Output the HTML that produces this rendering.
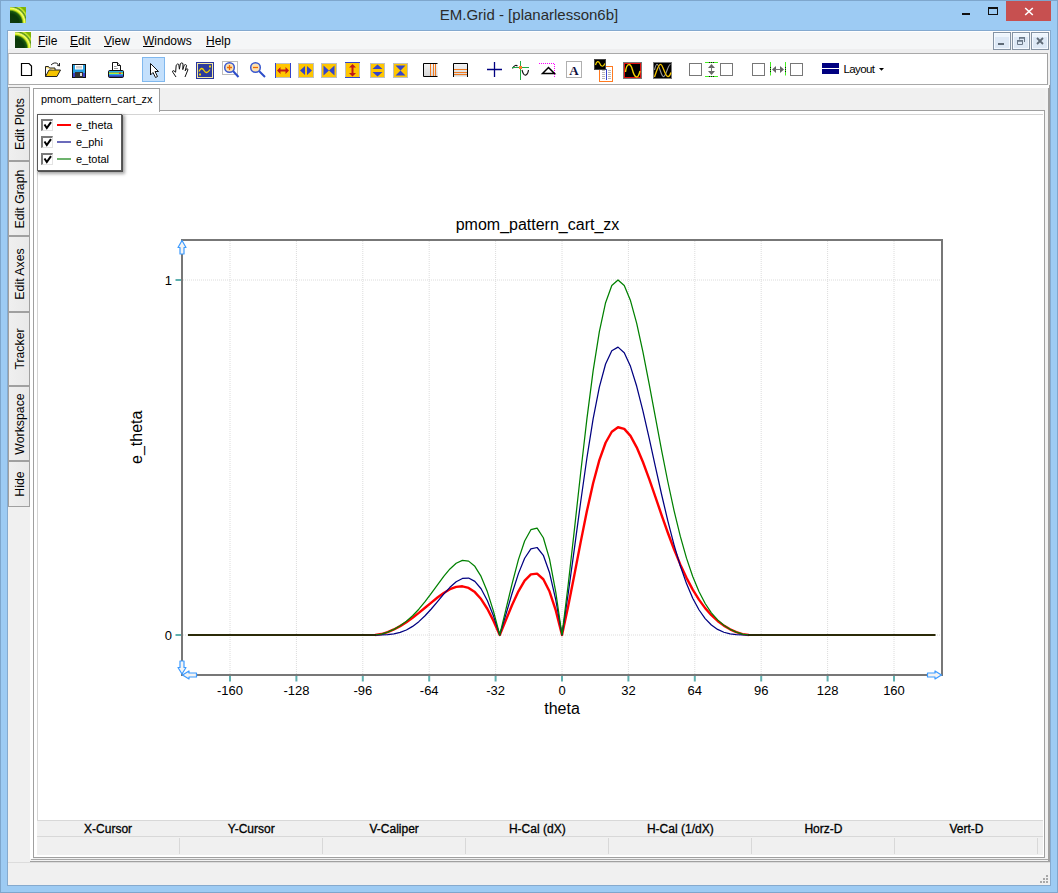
<!DOCTYPE html>
<html><head><meta charset="utf-8">
<style>
*{margin:0;padding:0;box-sizing:border-box}
html,body{width:1058px;height:893px;overflow:hidden;background:#9dcbf3;font-family:"Liberation Sans",sans-serif;color:#000}
.a{position:absolute}
#frame{left:0;top:0;width:1058px;height:893px;border:1px solid #7ea6cc}
#title{left:0;top:6px;width:1058px;text-align:center;font-size:15px;color:#2b2b2b;letter-spacing:0}
#client{left:8px;top:30px;width:1042px;height:855px;background:#f0f0f0;border-top:1px solid #84a9cf}
#menubar{left:8px;top:31px;width:1042px;height:18px;background:#f5f6f7;border-top:1px solid #fff}
#menuband{left:8px;top:49px;width:1042px;height:4px;background:#eeeeef}
.menu{top:34px;font-size:12px;color:#000}
.menu u{text-decoration:underline;text-decoration-thickness:1px;text-underline-offset:0.5px}
#toolbar{left:8px;top:53px;width:1040px;height:32px;background:#fff;border-top:1px solid #a9a9a9;border-bottom:1px solid #a9a9a9;border-left:1px solid #c8c8c8;border-right:1px solid #a0a0a0}
.vtab{left:8px;width:22px;background:linear-gradient(to right,#efefef,#e9e9e9);border:1px solid #a0a0a0}
.vtab span{position:absolute;left:50%;top:50%;transform:translate(calc(-50% + 0.5px),-50%) rotate(-90deg);white-space:nowrap;font-size:12.3px}
.hdr{top:822px;font-size:12px;-webkit-text-stroke:0.3px #000;text-align:center;width:143px}
.mdib{top:32px;width:18px;height:18px;border:1px solid #8593a3;background:linear-gradient(#eef5fc 0,#eef5fc 22%,#dde8f5 23%,#dde8f5 100%);box-shadow:inset 0 0 0 1px #f4f9ff}
</style></head><body>
<div class="a" id="frame"></div>
<!-- title icon -->
<div class="a" style="left:10px;top:7px;width:16px;height:16px;background:radial-gradient(circle at 0% 100%,#103a10 0,#0a3a08 40%,#1a5a10 52%,#d8f020 60%,#f6ff70 66%,#50901a 73%,#d0ec30 79%,#78b000 86%,#8cbc10 100%)"></div>
<div class="a" id="title">EM.Grid - [planarlesson6b]</div>
<!-- title buttons -->
<div class="a" style="left:962px;top:13px;width:8px;height:2px;background:#111"></div>
<div class="a" style="left:988px;top:7px;width:10px;height:8px;border:1px solid #111;border-top-width:2px"></div>
<div class="a" style="left:1006px;top:1px;width:45px;height:20px;background:#c75050"></div>
<svg class="a" style="left:1024px;top:7px" width="10" height="9"><path d="M1.2 1 L8.8 8 M8.8 1 L1.2 8" stroke="#fff" stroke-width="1.6"/></svg>

<div class="a" id="client"></div>
<div class="a" style="left:7px;top:30px;width:1044px;height:856px;border:1px solid #85aace;border-top:none"></div>
<div class="a" id="menubar"></div>
<div class="a" id="menuband"></div>
<div class="a" style="left:15px;top:32px;width:16px;height:16px;background:radial-gradient(circle at 0% 100%,#103a10 0,#0a3a08 40%,#1a5a10 52%,#d8f020 60%,#f6ff70 66%,#50901a 73%,#d0ec30 79%,#78b000 86%,#8cbc10 100%)"></div>
<div class="a menu" style="left:38px"><u>F</u>ile</div>
<div class="a menu" style="left:70px"><u>E</u>dit</div>
<div class="a menu" style="left:104px"><u>V</u>iew</div>
<div class="a menu" style="left:143px"><u>W</u>indows</div>
<div class="a menu" style="left:206px"><u>H</u>elp</div>
<div class="a mdib" style="left:993px"></div>
<div class="a mdib" style="left:1012px"></div>
<div class="a mdib" style="left:1031px"></div>
<div class="a" style="left:998px;top:43px;width:6px;height:2px;background:#5f6b77"></div>
<svg class="a" style="left:1012px;top:32px" width="18" height="18"><g fill="none" stroke="#6a7888" stroke-width="1"><path d="M5.5 8.5 V12.5 H10.5 V8.5 Z"/><path d="M7.5 7.5 V5.5 H12.5 V10"/></g><path d="M5 8 H11 V9.7 H5 Z M7 5 H13 V6.7 H7 Z" fill="#6a7888"/></svg>
<svg class="a" style="left:1035px;top:36px" width="10" height="10"><path d="M2 2 L8 8 M8 2 L2 8" stroke="#5f6b77" stroke-width="1.8"/></svg>

<div class="a" id="toolbar"></div>
<svg class="a" style="left:0;top:0" width="1058" height="90">
<!-- new doc -->
<path d="M21.5 63.5 H29 L31.5 66 V75.5 H21.5 Z" fill="#fff" stroke="#000" stroke-width="1.2"/>
<!-- open folder -->
<path d="M45.5 68 L45.5 76.5 L57 76.5 L60.5 70 L49 70 L45.5 76.5" fill="#f5c400" stroke="#222" stroke-width="1"/>
<path d="M45.5 68 L45.5 66.5 L48.5 66.5 L49.5 68 L55 68 L55 70" fill="#ffe37a" stroke="#222" stroke-width="1"/>
<path d="M51 65 Q55 61 58.5 64.5" fill="none" stroke="#222" stroke-width="1"/>
<path d="M57 65 L59.5 66 L59.5 63" fill="none" stroke="#222" stroke-width="1"/>
<!-- save -->
<rect x="72.5" y="64.5" width="13" height="13" fill="#28a0e0" stroke="#111" stroke-width="1"/><rect x="73" y="73" width="12" height="4" fill="#3a40c8"/>
<rect x="75" y="65" width="8" height="4.5" fill="#fff"/><rect x="76" y="66" width="6" height="2.5" fill="#d0d0d0"/>
<rect x="75" y="72" width="8" height="5.5" fill="#333"/>
<rect x="80" y="73" width="2" height="3" fill="#ddd"/>
<!-- print -->
<path d="M112.5 62.5 H117.5 L120.5 65.5 V70.5 H112.5 Z" fill="#fff" stroke="#111" stroke-width="1"/>
<path d="M117.5 62.5 V65.5 H120.5" fill="#ddd" stroke="#111" stroke-width="1"/>
<path d="M114 66.5 H116.5 M114 68.5 H118" stroke="#999" stroke-width="1"/>
<rect x="108.5" y="70.5" width="15" height="7" rx="1.2" fill="#1a2a80" stroke="#111" stroke-width="1"/>
<rect x="109" y="71" width="14" height="1.5" fill="#22aee8"/>
<rect x="109" y="72.5" width="14" height="1.5" fill="#b8e830"/>
<rect x="109" y="74" width="14" height="1" fill="#22aee8"/>
<rect x="109" y="75" width="14" height="1.5" fill="#3a5ad0"/>
<rect x="119" y="72.5" width="2" height="1.5" fill="#ee3333"/>
<!-- selected arrow button -->
<rect x="142.5" y="57.5" width="22" height="24" fill="#c4e0fc" stroke="#80b8ee" stroke-width="1"/>
<path d="M150.5 63.5 L150.5 75 L153 72.5 L155.5 77.5 L157.5 76.5 L155 71.5 L158.5 71.5 Z" fill="#fff" stroke="#111" stroke-width="1" stroke-linejoin="round"/>
<!-- hand -->
<path d="M176 77 L172.8 72.2 Q172 70.6 173.6 70.6 L175.6 72.2 L176.2 65.2 Q177.4 63.2 178.8 64.4 L179.4 69.2 L180.4 63.6 Q181.8 62.2 183 63.6 L182.8 69.6 L184.2 65.2 Q185.6 63.8 186.6 65.4 L185.2 70.8 L186.2 69 Q187.8 68.2 187.9 69.8 L185 77" fill="#fff" stroke="#111" stroke-width="1" stroke-linejoin="round"/>
<!-- sine box -->
<rect x="196.5" y="62.5" width="17" height="16" fill="#2c3b9e" stroke="#2836a0" stroke-width="1"/>
<rect x="197.5" y="63.5" width="15" height="14" fill="none" stroke="#f3e7a0" stroke-width="1"/>
<path d="M199 71.5 Q201.5 66 204 70.5 Q206.5 75 210 69.5" fill="none" stroke="#f5d300" stroke-width="1.3"/>
<rect x="199" y="73.5" width="2" height="2" fill="#f5d300"/><rect x="209" y="65.5" width="2" height="2" fill="#f5d300"/>
<!-- zoom in -->
<rect x="222.5" y="61.5" width="15" height="13" fill="#fff" stroke="#bdbdbd" stroke-width="1"/>
<line x1="233" y1="71" x2="238.5" y2="77" stroke="#2c4cc8" stroke-width="2"/>
<circle cx="229.5" cy="67.5" r="4.8" fill="#fde2b0" stroke="#3a58d0" stroke-width="1.5"/>
<path d="M227 67.5 H232 M229.5 65 V70" stroke="#ef6a00" stroke-width="1.3"/>
<!-- zoom out -->
<line x1="259" y1="71" x2="265" y2="77" stroke="#2c4cc8" stroke-width="2"/>
<circle cx="255.5" cy="67.5" r="4.8" fill="#fde2b0" stroke="#3a58d0" stroke-width="1.5"/>
<path d="M253 67.5 H258" stroke="#ef6a00" stroke-width="1.3"/>
<!-- arrow group -->
<g stroke-width="1">
<rect x="275.5" y="63.5" width="15" height="14" fill="#ffc600" stroke="#c0c0c0"/>
<line x1="275.5" y1="63" x2="275.5" y2="78" stroke="#3344cc"/><line x1="290.5" y1="63" x2="290.5" y2="78" stroke="#3344cc"/>
<path d="M277 70.5 L280.5 67 V69.5 H285.5 V67 L289 70.5 L285.5 74 V71.5 H280.5 V74 Z" fill="#c01818"/>
<rect x="298.5" y="63.5" width="15" height="14" fill="#ffc600" stroke="#c0c0c0"/>
<path d="M305 66 V75 L300 70.5 Z M307 66 V75 L312 70.5 Z" fill="#3344cc"/>
<rect x="321.5" y="63.5" width="15" height="14" fill="#ffc600" stroke="#c0c0c0"/>
<path d="M323.5 65.5 V75.5 L329 70.5 Z M334.5 65.5 V75.5 L329 70.5 Z" fill="#3344cc"/>
<rect x="345.5" y="62.5" width="14" height="15" fill="#ffc600" stroke="#c0c0c0"/>
<line x1="345" y1="62.5" x2="360" y2="62.5" stroke="#3344cc"/><line x1="345" y1="77.5" x2="360" y2="77.5" stroke="#3344cc"/>
<path d="M352.5 64 L356 67.5 H353.5 V73 H356 L352.5 76.5 L349 73 H351.5 V67.5 H349 Z" fill="#c01818"/>
<rect x="370.5" y="63.5" width="14" height="14" fill="#ffc600" stroke="#c0c0c0"/>
<path d="M372.5 69 H382.5 L377.5 64.5 Z M372.5 72 H382.5 L377.5 76.5 Z" fill="#3344cc"/>
<rect x="393.5" y="63.5" width="14" height="14" fill="#ffc600" stroke="#c0c0c0"/>
<path d="M395.5 65.5 H405.5 L400.5 70.5 Z M395.5 75.5 H405.5 L400.5 70.5 Z" fill="#3344cc"/>
</g>
<!-- vertical lines icon -->
<defs><linearGradient id="gg" x1="0" y1="0" x2="0" y2="1"><stop offset="0" stop-color="#f4f4f4"/><stop offset="1" stop-color="#d6d6d6"/></linearGradient></defs>
<rect x="423.5" y="63.5" width="14" height="13" fill="url(#gg)"/>
<path d="M437.5 63.5 H423.5 V76.5 H437.5" fill="none" stroke="#000" stroke-width="1"/>
<path d="M430.5 64 V76 M433.5 64 V76 M435.5 64 V76" stroke="#f07a20" stroke-width="1"/>
<!-- horizontal lines icon -->
<rect x="453.5" y="63.5" width="14" height="13" fill="url(#gg)"/>
<path d="M453.5 77 V63.5 H467.5 V77" fill="none" stroke="#000" stroke-width="1"/>
<path d="M454 69.5 H467 M454 72.5 H467 M454 74.5 H467" stroke="#f07a20" stroke-width="1"/>
<!-- plus -->
<path d="M487 69.5 H502 M494.5 62 V77" stroke="#000080" stroke-width="1.3"/>
<!-- crosshair sine -->
<path d="M512.5 68.5 Q515 64 517.5 66 M522 70 Q523.5 76 526 75 Q528 74 528.5 70" fill="none" stroke="#111" stroke-width="1.1"/>
<path d="M520.5 61 V80 M512 67.5 H529" stroke="#22aa44" stroke-width="1"/>
<rect x="519" y="66" width="3" height="3" fill="#ff7f27"/>
<!-- triangle -->
<path d="M539 63.5 H554.5 V78" fill="none" stroke="#ff00ff" stroke-width="1" stroke-dasharray="1,1"/>
<path d="M542.5 73.5 L548.5 67.5 L554.5 73.5 Z" fill="none" stroke="#000" stroke-width="1.5"/>
<!-- A -->
<rect x="566.5" y="61.5" width="15" height="16" fill="#fff" stroke="#b0b0b0" stroke-width="1"/>
<text x="574" y="75" font-family="Liberation Serif" font-weight="bold" font-size="13" text-anchor="middle" fill="#101040">A</text>
<!-- scope + doc -->
<rect x="599.5" y="66.5" width="13" height="15" fill="#fff" stroke="#ff7a20" stroke-width="1"/>
<path d="M602 70.5 H605 M602 72.5 H605 M602 74.5 H605 M602 76.5 H605 M602 78.5 H605 M608 70.5 H611 M608 72.5 H611 M608 74.5 H611 M608 76.5 H611 M608 78.5 H611" stroke="#b8b8b8" stroke-width="1"/>
<path d="M606.5 69 V80" stroke="#3344cc" stroke-width="1"/>
<rect x="594.5" y="59.5" width="11" height="10" fill="#000" stroke="#444" stroke-width="1"/>
<path d="M595.5 65 C596.5 61, 598.5 60.5, 599.8 63.5 C601 66.8, 603.5 67.5, 604.8 63.5" fill="none" stroke="#f5d300" stroke-width="1.2"/>
<!-- red scope -->
<rect x="623.5" y="62.5" width="18" height="16" fill="#000" stroke="#777" stroke-width="1"/>
<rect x="624.5" y="63.5" width="16" height="14" fill="none" stroke="#e01010" stroke-width="1"/>
<path d="M625.5 72 C626.5 63, 630.5 62, 632.5 70 S 638 80, 640 71" fill="none" stroke="#f5d300" stroke-width="1.4"/>
<!-- dual sine -->
<rect x="653.5" y="62.5" width="18" height="16" fill="#000" stroke="#777" stroke-width="1"/>
<path d="M654.5 70 C655.5 66, 656 64.3, 657 64.3 C659.5 64.5, 661 76.6, 663.5 76.6 C666 76.5, 668 64.3, 670.5 64.3" fill="none" stroke="#999" stroke-width="1.1"/>
<path d="M654.5 77 C657 70, 658.5 64, 660.6 64.3 C663 64.5, 665 76.5, 668 76.6 C669.5 76.6, 670.5 74, 671 72.5" fill="none" stroke="#f5c400" stroke-width="1.3"/>
<!-- align boxes -->
<g fill="none" stroke="#777" stroke-width="1">
<rect x="689.5" y="63.5" width="12" height="12"/><rect x="720.5" y="63.5" width="12" height="12"/>
<rect x="752.5" y="63.5" width="12" height="12"/><rect x="790.5" y="63.5" width="12" height="12"/>
</g>
<path d="M705 62.5 H718 M705 76.5 H718" stroke="#44ee22" stroke-width="1"/><path d="M709 62.5 H714 M709 76.5 H714" stroke="#111" stroke-width="1" stroke-dasharray="1,1"/>
<path d="M711.5 64 L708 68 H715 Z M711.5 75 L708 71 H715 Z" fill="#666"/><path d="M711.5 67 V72" stroke="#777"/>
<path d="M770.5 62 V75.5 M785.5 62 V75.5" stroke="#44ee22" stroke-width="1"/><path d="M770.5 67 V72 M785.5 67 V72" stroke="#111" stroke-width="1" stroke-dasharray="1,1"/>
<path d="M772 69.5 L776 66 V73 Z M784 69.5 L780 66 V73 Z" fill="#666"/><path d="M775 69.5 H781" stroke="#777"/>
<!-- layout -->
<rect x="822" y="63" width="17" height="5" fill="#000080"/><rect x="822" y="69" width="17" height="5" fill="#000080"/>
<text x="843.5" y="73" font-family="Liberation Sans" font-size="11.5" fill="#000" textLength="31.5" lengthAdjust="spacing">Layout</text>
<path d="M879 68 H884 L881.5 70.8 Z" fill="#000"/>
</svg>


<!-- left vertical tabs -->
<div class="a vtab" style="top:87px;height:74px"><span>Edit Plots</span></div>
<div class="a vtab" style="top:161px;height:75px"><span>Edit Graph</span></div>
<div class="a vtab" style="top:236px;height:76px"><span>Edit Axes</span></div>
<div class="a vtab" style="top:312px;height:74px"><span>Tracker</span></div>
<div class="a vtab" style="top:386px;height:75px"><span>Workspace</span></div>
<div class="a vtab" style="top:461px;height:46px"><span>Hide</span></div>

<!-- MDI area borders -->
<div class="a" style="left:30px;top:85px;width:1020px;height:777px;background:#f2f2f2;border-bottom:1px solid #a0a0a0;border-right:2px solid #a0a0a0"></div>
<div class="a" style="left:30px;top:85px;width:1019px;height:3px;background:#fff"></div>
<div class="a" style="left:30px;top:85px;width:3px;height:774px;background:#fff"></div>
<div class="a" style="left:33px;top:88px;width:1012px;height:22px;background:#f0f0f0"></div>
<!-- page -->
<div class="a" style="left:33px;top:110px;width:1012px;height:748px;border:1px solid #a0a0a0;background:#fff"></div>
<div class="a" style="left:31px;top:859px;width:1017px;height:1px;background:#a8a8a8"></div>
<!-- doc tab -->
<div class="a" style="left:33px;top:88px;width:127px;height:24px;border:1px solid #a0a0a0;border-bottom:none;background:#fff"></div>
<div class="a" style="left:41px;top:93px;font-size:10.9px;color:#000">pmom_pattern_cart_zx</div>

<!-- plot panel -->
<div class="a" style="left:37px;top:114px;width:1006px;height:707px;border-left:1px solid #d4d4d4;border-top:1px solid #d4d4d4;background:#fff"></div>

<svg class="a" style="left:0;top:0" width="1058" height="893">
<line x1="230.0" y1="241" x2="230.0" y2="674" stroke="#dcdcdc" stroke-width="1" stroke-dasharray="1,1"/>
<line x1="296.4" y1="241" x2="296.4" y2="674" stroke="#dcdcdc" stroke-width="1" stroke-dasharray="1,1"/>
<line x1="362.8" y1="241" x2="362.8" y2="674" stroke="#dcdcdc" stroke-width="1" stroke-dasharray="1,1"/>
<line x1="429.2" y1="241" x2="429.2" y2="674" stroke="#dcdcdc" stroke-width="1" stroke-dasharray="1,1"/>
<line x1="495.6" y1="241" x2="495.6" y2="674" stroke="#dcdcdc" stroke-width="1" stroke-dasharray="1,1"/>
<line x1="562.0" y1="241" x2="562.0" y2="674" stroke="#dcdcdc" stroke-width="1" stroke-dasharray="1,1"/>
<line x1="628.4" y1="241" x2="628.4" y2="674" stroke="#dcdcdc" stroke-width="1" stroke-dasharray="1,1"/>
<line x1="694.8" y1="241" x2="694.8" y2="674" stroke="#dcdcdc" stroke-width="1" stroke-dasharray="1,1"/>
<line x1="761.2" y1="241" x2="761.2" y2="674" stroke="#dcdcdc" stroke-width="1" stroke-dasharray="1,1"/>
<line x1="827.6" y1="241" x2="827.6" y2="674" stroke="#dcdcdc" stroke-width="1" stroke-dasharray="1,1"/>
<line x1="894.0" y1="241" x2="894.0" y2="674" stroke="#dcdcdc" stroke-width="1" stroke-dasharray="1,1"/>
<line x1="183" y1="280" x2="941" y2="280" stroke="#dcdcdc" stroke-width="1" stroke-dasharray="1,1"/>
<line x1="183" y1="635" x2="941" y2="635" stroke="#dcdcdc" stroke-width="1" stroke-dasharray="1,1"/>
<rect x="182" y="240" width="760" height="435" fill="none" stroke="#777" stroke-width="2"/>
<line x1="230.0" y1="676" x2="230.0" y2="681.5" stroke="#5fb0b0" stroke-width="2"/>
<text x="230.0" y="694.5" font-size="13" text-anchor="middle" font-family="Liberation Sans">-160</text>
<line x1="296.4" y1="676" x2="296.4" y2="681.5" stroke="#5fb0b0" stroke-width="2"/>
<text x="296.4" y="694.5" font-size="13" text-anchor="middle" font-family="Liberation Sans">-128</text>
<line x1="362.8" y1="676" x2="362.8" y2="681.5" stroke="#5fb0b0" stroke-width="2"/>
<text x="362.8" y="694.5" font-size="13" text-anchor="middle" font-family="Liberation Sans">-96</text>
<line x1="429.2" y1="676" x2="429.2" y2="681.5" stroke="#5fb0b0" stroke-width="2"/>
<text x="429.2" y="694.5" font-size="13" text-anchor="middle" font-family="Liberation Sans">-64</text>
<line x1="495.6" y1="676" x2="495.6" y2="681.5" stroke="#5fb0b0" stroke-width="2"/>
<text x="495.6" y="694.5" font-size="13" text-anchor="middle" font-family="Liberation Sans">-32</text>
<line x1="562.0" y1="676" x2="562.0" y2="681.5" stroke="#5fb0b0" stroke-width="2"/>
<text x="562.0" y="694.5" font-size="13" text-anchor="middle" font-family="Liberation Sans">0</text>
<line x1="628.4" y1="676" x2="628.4" y2="681.5" stroke="#5fb0b0" stroke-width="2"/>
<text x="628.4" y="694.5" font-size="13" text-anchor="middle" font-family="Liberation Sans">32</text>
<line x1="694.8" y1="676" x2="694.8" y2="681.5" stroke="#5fb0b0" stroke-width="2"/>
<text x="694.8" y="694.5" font-size="13" text-anchor="middle" font-family="Liberation Sans">64</text>
<line x1="761.2" y1="676" x2="761.2" y2="681.5" stroke="#5fb0b0" stroke-width="2"/>
<text x="761.2" y="694.5" font-size="13" text-anchor="middle" font-family="Liberation Sans">96</text>
<line x1="827.6" y1="676" x2="827.6" y2="681.5" stroke="#5fb0b0" stroke-width="2"/>
<text x="827.6" y="694.5" font-size="13" text-anchor="middle" font-family="Liberation Sans">128</text>
<line x1="894.0" y1="676" x2="894.0" y2="681.5" stroke="#5fb0b0" stroke-width="2"/>
<text x="894.0" y="694.5" font-size="13" text-anchor="middle" font-family="Liberation Sans">160</text>
<line x1="175.5" y1="280" x2="181" y2="280" stroke="#5fb0b0" stroke-width="2"/>
<text x="172" y="284.8" font-size="13" text-anchor="end" font-family="Liberation Sans">1</text>
<line x1="175.5" y1="635" x2="181" y2="635" stroke="#5fb0b0" stroke-width="2"/>
<text x="172" y="639.8" font-size="13" text-anchor="end" font-family="Liberation Sans">0</text>
<text x="537.5" y="230" font-size="16" text-anchor="middle" font-family="Liberation Sans">pmom_pattern_cart_zx</text>
<text x="562" y="714" font-size="16" text-anchor="middle" font-family="Liberation Sans">theta</text>
<text transform="translate(142,437.3) rotate(-90)" font-size="16" text-anchor="middle" font-family="Liberation Sans">e_theta</text>
<polyline fill="none" stroke="#ff0000" stroke-width="2.4" stroke-linejoin="round" points="375.25,635.00 381.48,634.06 387.70,632.13 393.92,629.45 400.15,626.12 406.38,622.21 412.60,617.77 418.82,612.92 425.05,607.78 431.27,602.55 437.50,597.49 443.73,592.93 449.95,589.24 456.18,586.89 462.40,586.30 468.62,587.93 474.85,592.11 481.07,599.04 487.30,608.73 493.52,620.90 499.75,635.00 505.98,619.86 512.20,604.83 518.42,591.28 524.65,580.65 530.88,574.36 537.10,573.61 543.33,579.24 549.55,591.58 555.77,610.44 562.00,635.00 568.23,606.05 574.45,574.43 580.67,542.12 586.90,511.10 593.12,483.25 599.35,460.10 605.58,442.73 611.80,431.76 618.02,427.27 624.25,428.89 630.48,435.90 636.70,447.32 642.92,462.02 649.15,478.90 655.38,496.89 661.60,515.08 667.83,532.73 674.05,549.28 680.27,564.39 686.50,577.85 692.73,589.59 698.95,599.65 705.17,608.13 711.40,615.18 717.62,620.96 723.85,625.62 730.08,629.31 736.30,632.12 742.52,634.07 748.75,635.00"/>
<polyline fill="none" stroke="#000080" stroke-width="1.25" stroke-linejoin="round" points="375.25,635.00 381.48,634.97 387.70,634.70 393.92,633.94 400.15,632.44 406.38,629.97 412.60,626.40 418.82,621.65 425.05,615.78 431.27,608.99 437.50,601.62 443.73,594.18 449.95,587.33 456.18,581.81 462.40,578.45 468.62,578.07 474.85,581.35 481.07,588.75 487.30,600.43 493.52,616.10 499.75,635.00 505.98,614.13 512.20,593.00 518.42,573.63 524.65,558.23 530.88,548.92 537.10,547.51 543.33,555.30 549.55,572.82 555.77,599.77 562.00,635.00 568.23,593.45 574.45,548.14 580.67,501.99 586.90,457.99 593.12,418.91 599.35,387.04 605.58,364.00 611.80,350.67 618.02,347.12 624.25,352.74 630.48,366.33 636.70,386.30 642.92,410.86 649.15,438.17 655.38,466.54 661.60,494.50 667.83,520.87 674.05,544.82 680.27,565.81 686.50,583.61 692.73,598.20 698.95,609.76 705.17,618.56 711.40,624.99 717.62,629.42 723.85,632.26 730.08,633.90 736.30,634.70 742.52,634.97 748.75,635.00"/>
<polyline fill="none" stroke="#008000" stroke-width="1.25" stroke-linejoin="round" points="375.25,635.00 381.48,634.06 387.70,632.11 393.92,629.35 400.15,625.76 406.38,621.25 412.60,615.75 418.82,609.20 425.05,601.68 431.27,593.42 437.50,584.79 443.73,576.38 449.95,568.92 456.18,563.28 462.40,560.38 468.62,561.13 474.85,566.31 481.07,576.42 487.30,591.58 493.52,611.42 499.75,635.00 505.98,609.22 512.20,583.29 518.42,559.65 524.65,540.94 530.88,529.71 537.10,528.13 543.33,537.73 549.55,559.16 555.77,592.05 562.00,635.00 568.23,584.36 574.45,529.11 580.67,472.77 586.90,418.94 593.12,370.95 599.35,331.56 605.58,302.72 611.80,285.50 618.02,280.00 624.25,285.50 630.48,300.60 636.70,323.43 642.92,351.88 649.15,383.79 655.38,417.17 661.60,450.28 667.83,481.75 674.05,510.58 680.27,536.15 686.50,558.14 692.73,576.55 698.95,591.56 705.17,603.50 711.40,612.79 717.62,619.89 723.85,625.23 730.08,629.21 736.30,632.10 742.52,634.07 748.75,635.00"/>
<path d="M188 635 H376 M748 635 H935.5" stroke="#2b2a08" stroke-width="2"/>
<path d="M182 240.5 L186 247.5 L184 247.5 L184 254 L180 254 L180 247.5 L178 247.5 Z" fill="#f4f4f4" stroke="#3d9bff" stroke-width="1.2" stroke-linejoin="round"/>
<path d="M182 674 L178 667.5 L180 667.5 L180 661 L184 661 L184 667.5 L186 667.5 Z" fill="#f4f4f4" stroke="#3d9bff" stroke-width="1.2" stroke-linejoin="round"/>
<path d="M182.5 675 L189 671 L189 673 L196.5 673 L196.5 677 L189 677 L189 679 Z" fill="#f4f4f4" stroke="#3d9bff" stroke-width="1.2" stroke-linejoin="round"/>
<path d="M941.5 675 L935 671 L935 673 L927.5 673 L927.5 677 L935 677 L935 679 Z" fill="#f4f4f4" stroke="#3d9bff" stroke-width="1.2" stroke-linejoin="round"/>
</svg>

<!-- legend -->
<div class="a" style="left:37px;top:114px;width:85px;height:57px;border:1px solid #5a5a5a;background:#fff;box-shadow:1px 1px 0 #505050,2px 2px 3px 1px rgba(0,0,0,.35)"></div>
<div class="a" style="left:41px;top:119px;width:12px;height:12px;background:#fff;border-top:2px solid #7a7a7a;border-left:2px solid #7a7a7a;border-right:1px solid #e3e3e3;border-bottom:1px solid #e3e3e3"></div>
<svg class="a" style="left:41px;top:119px" width="12" height="12"><path d="M3.5 5.5 L5.8 9 L10 3.2" fill="none" stroke="#000" stroke-width="2"/></svg>
<div class="a" style="left:57px;top:124px;width:14px;height:2.2px;background:#ff0000"></div>
<div class="a" style="left:76px;top:119px;font-size:11px">e_theta</div>
<div class="a" style="left:41px;top:136px;width:12px;height:12px;background:#fff;border-top:2px solid #7a7a7a;border-left:2px solid #7a7a7a;border-right:1px solid #e3e3e3;border-bottom:1px solid #e3e3e3"></div>
<svg class="a" style="left:41px;top:136px" width="12" height="12"><path d="M3.5 5.5 L5.8 9 L10 3.2" fill="none" stroke="#000" stroke-width="2"/></svg>
<div class="a" style="left:57px;top:141px;width:14px;height:2px;background:#6b6bbb"></div>
<div class="a" style="left:76px;top:136px;font-size:11px">e_phi</div>
<div class="a" style="left:41px;top:153px;width:12px;height:12px;background:#fff;border-top:2px solid #7a7a7a;border-left:2px solid #7a7a7a;border-right:1px solid #e3e3e3;border-bottom:1px solid #e3e3e3"></div>
<svg class="a" style="left:41px;top:153px" width="12" height="12"><path d="M3.5 5.5 L5.8 9 L10 3.2" fill="none" stroke="#000" stroke-width="2"/></svg>
<div class="a" style="left:57px;top:158px;width:14px;height:2px;background:#6db36d"></div>
<div class="a" style="left:76px;top:153px;font-size:11px">e_total</div>

<!-- status grid -->
<div class="a" style="left:37px;top:820px;width:1006px;height:35px;background:#f0f0f0;border-top:1px solid #d8d8d8"></div>
<div class="a" style="left:37px;top:836px;width:1006px;height:1px;background:#d8d8d8"></div>
<div class="a hdr" style="left:36.6px">X-Cursor</div>
<div class="a" style="left:179px;top:838px;width:1px;height:16px;background:#d8d8d8"></div>
<div class="a hdr" style="left:179.7px">Y-Cursor</div>
<div class="a" style="left:322px;top:838px;width:1px;height:16px;background:#d8d8d8"></div>
<div class="a hdr" style="left:322.7px">V-Caliper</div>
<div class="a" style="left:465px;top:838px;width:1px;height:16px;background:#d8d8d8"></div>
<div class="a hdr" style="left:465.8px">H-Cal (dX)</div>
<div class="a" style="left:608px;top:838px;width:1px;height:16px;background:#d8d8d8"></div>
<div class="a hdr" style="left:608.8px">H-Cal (1/dX)</div>
<div class="a" style="left:751px;top:838px;width:1px;height:16px;background:#d8d8d8"></div>
<div class="a hdr" style="left:751.9px">Horz-D</div>
<div class="a" style="left:894px;top:838px;width:1px;height:16px;background:#d8d8d8"></div>
<div class="a hdr" style="left:894.9px">Vert-D</div>
<div class="a" style="left:1037px;top:838px;width:1px;height:16px;background:#d8d8d8"></div>
<!-- status bar -->
<div class="a" style="left:8px;top:862px;width:1042px;height:1px;background:#dcdcdc"></div>
<div class="a" style="left:1046px;top:875px;width:2px;height:2px;background:#a8a8a8"></div>
<div class="a" style="left:1043px;top:878px;width:2px;height:2px;background:#a8a8a8"></div>
<div class="a" style="left:1046px;top:878px;width:2px;height:2px;background:#a8a8a8"></div>
<div class="a" style="left:1040px;top:881px;width:2px;height:2px;background:#a8a8a8"></div>
<div class="a" style="left:1043px;top:881px;width:2px;height:2px;background:#a8a8a8"></div>
<div class="a" style="left:1046px;top:881px;width:2px;height:2px;background:#a8a8a8"></div>
</body></html>
